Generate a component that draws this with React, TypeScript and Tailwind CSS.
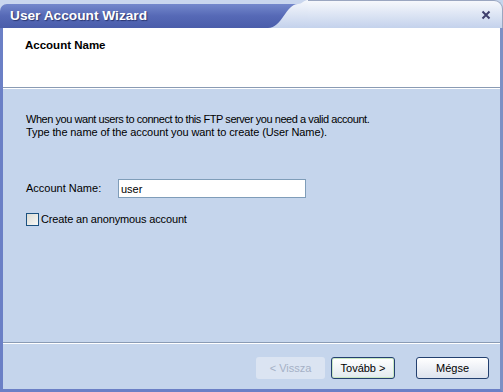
import React, { useState } from "react";

const font = "font-['Liberation_Sans',Arial,sans-serif]";

const TitleBar = () => {
  return (
    <div className="relative flex h-[28px] w-full">
      <div className="flex w-[268px] flex-col bg-[#c9d6ee]">
        <div className="h-[4px]" />
        <div className="flex h-[24px] items-center rounded-tl-[7px] bg-gradient-to-b from-[#7488cc] via-[#5669b6] to-[#4a5daa] pl-[10px]">
          <span className="text-[13.7px] font-bold text-white [text-shadow:1px_1px_1px_#2a3670]">
            User Account Wizard
          </span>
        </div>
      </div>
      <svg width="40" height="28" viewBox="0 0 40 28" className="block">
        <defs>
          <linearGradient id="tabDark" x1="0" y1="0" x2="0" y2="1">
            <stop offset="0" stopColor="#7488cc" />
            <stop offset="0.5" stopColor="#5669b6" />
            <stop offset="1" stopColor="#4a5daa" />
          </linearGradient>
          <linearGradient id="tabLight" x1="0" y1="0" x2="0" y2="1">
            <stop offset="0" stopColor="#f6f8fc" />
            <stop offset="1" stopColor="#c4d2ec" />
          </linearGradient>
        </defs>
        <rect x="0" y="0" width="40" height="28" fill="url(#tabLight)" />
        <path d="M0,0 H40 C36,0 34,4 30,4 H0 Z" fill="#c9d6ee" />
        <path d="M0,4 H30 C18,4 14,28 0,28 Z" fill="url(#tabDark)" />
      </svg>
      <div className="flex flex-1 items-center justify-end rounded-tr-[9px] border-r border-t border-[#9aa6c0] bg-gradient-to-b from-[#f6f8fc] to-[#c4d2ec] pr-[11px]">
        <svg width="10" height="10" viewBox="0 0 10 10">
          <path d="M1.5,1.5 L8.5,8.5 M8.5,1.5 L1.5,8.5" stroke="#3e3f6c" strokeWidth="2" />
        </svg>
      </div>
    </div>
  );
};

const App = () => {
  const [name, setName] = useState("user");
  const [anon, setAnon] = useState(false);

  return (
    <div className={`${font} flex h-[392px] w-[503px] flex-col bg-[#c5d5ec] text-[11px] text-black`}>
      <TitleBar />
      <div className="flex flex-1 flex-col border-x-[3px] border-b-[3px] border-l-[#6b80c6] border-r-[#7d90c4] border-b-[#6b80c6]">
        <div className="h-[59px] bg-white px-[22px] pt-[11px]">
          <h2 className="text-[11.5px] font-bold leading-[13px]">Account Name</h2>
        </div>
        <div className="border-t border-b border-t-[#8a9bb4] border-b-white" />

        <div className="flex flex-1 flex-col px-[23px] pt-[24px]">
          <p className="leading-[13px]">
            <span className="block tracking-[-0.45px]">
              When you want users to connect to this FTP server you need a valid account.
            </span>
            <span className="block tracking-[-0.1px]">
              Type the name of the account you want to create (User Name).
            </span>
          </p>

          <div className="mt-[40px] flex h-[19px] items-center">
            <label className="w-[92px]">Account Name:</label>
            <input
              value={name}
              onChange={(e) => setName(e.target.value)}
              className="h-[19px] w-[188px] border border-[#7f9db9] bg-white px-[2px] text-[11px] outline-none"
            />
          </div>

          <label className="mt-[15px] flex h-[13px] items-center gap-[2px]">
            <input
              type="checkbox"
              checked={anon}
              onChange={(e) => setAnon(e.target.checked)}
              className="h-[13px] w-[13px] appearance-none border border-[#1c5180] bg-gradient-to-br from-[#dcdcd5] to-[#f8f8f6]"
            />
            <span className="tracking-[-0.15px]">Create an anonymous account</span>
          </label>
        </div>

        <div className="border-t border-b border-t-[#8a9bb4] border-b-white" />
        <div className="flex h-[45px] items-start justify-end gap-[6px] pr-[11px] pt-[13px]">
          <button
            disabled
            className="h-[22px] w-[69px] rounded-[3px] bg-[#dbe4f2] text-[11px] text-[#a5b1c6]"
          >
            &lt; Vissza
          </button>
          <button className="h-[22px] w-[64px] rounded-[3px] border border-[#23406f] bg-gradient-to-b from-white to-[#e2eaee] text-[11px] shadow-[inset_0_0_0_1px_#c9e7c1]">
            Tovább &gt;
          </button>
          <button className="ml-[15px] h-[22px] w-[73px] rounded-[3px] border border-[#23406f] bg-gradient-to-b from-white to-[#dde3ee] text-[11px]">
            Mégse
          </button>
        </div>
      </div>
    </div>
  );
};

export default App;
